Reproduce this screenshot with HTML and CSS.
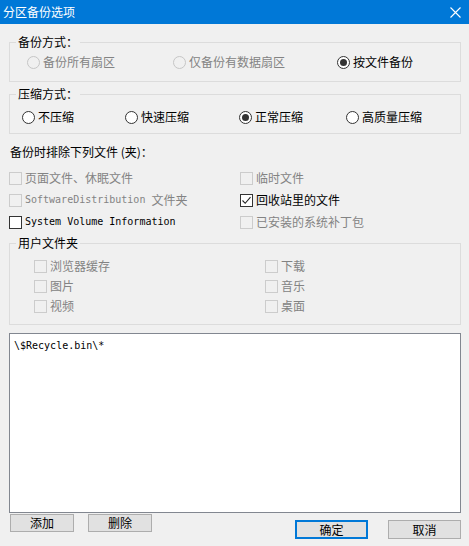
FILE: index.html
```html
<!DOCTYPE html>
<html lang="zh-CN">
<head>
    <meta charset="UTF-8">
    <title>分区备份选项</title>
    <link rel="stylesheet" href="styles.css">
</head>
<body>
    <div class="titlebar">
        <span class="title">分区备份选项</span>
        <svg class="close" width="11" height="11" viewBox="0 0 11 11">
            <path d="M0.5 0.5 L10.5 10.5 M10.5 0.5 L0.5 10.5" stroke="#fff" stroke-width="1.1" fill="none"/>
        </svg>
    </div>

    <div class="dialog">
        <fieldset class="group g-mode">
            <legend>备份方式<span class="punc">：</span></legend>
            <div class="row">
                <label class="opt w-146 disabled"><span class="radio"></span>备份所有扇区</label>
                <label class="opt w-164 disabled"><span class="radio"></span>仅备份有数据扇区</label>
                <label class="opt"><span class="radio on"></span>按文件备份</label>
            </div>
        </fieldset>

        <fieldset class="group g-zip">
            <legend>压缩方式<span class="punc">：</span></legend>
            <div class="row">
                <label class="opt w-103"><span class="radio"></span>不压缩</label>
                <label class="opt w-114"><span class="radio"></span>快速压缩</label>
                <label class="opt w-107"><span class="radio on"></span>正常压缩</label>
                <label class="opt"><span class="radio"></span>高质量压缩</label>
            </div>
        </fieldset>

        <div class="caption">备份时排除下列文件 (夹)<span class="punc">：</span></div>
        <div class="excl">
            <label class="opt disabled"><span class="check"></span>页面文件、休眠文件</label>
            <label class="opt disabled"><span class="check"></span>临时文件</label>
            <label class="opt disabled"><span class="check"></span><span class="mono">SoftwareDistribution </span>文件夹</label>
            <label class="opt"><span class="check on">
                <svg width="11" height="11" viewBox="0 0 11 11"><path d="M1.5 5.5 L4.2 8.3 L9.5 2.2" stroke="#222" stroke-width="1.1" fill="none"/></svg>
            </span>回收站里的文件</label>
            <label class="opt"><span class="check"></span><span class="mono">System Volume Information</span></label>
            <label class="opt disabled"><span class="check"></span>已安装的系统补丁包</label>
        </div>

        <fieldset class="group g-user">
            <legend>用户文件夹</legend>
            <div class="user-grid">
                <label class="opt disabled"><span class="check"></span>浏览器缓存</label>
                <label class="opt disabled"><span class="check"></span>下载</label>
                <label class="opt disabled"><span class="check"></span>图片</label>
                <label class="opt disabled"><span class="check"></span>音乐</label>
                <label class="opt disabled"><span class="check"></span>视频</label>
                <label class="opt disabled"><span class="check"></span>桌面</label>
            </div>
        </fieldset>

        <div class="listbox"><span class="mono">\$Recycle.bin\*</span></div>

        <div class="buttons">
            <div class="btn-left">
                <button class="btn small">添加</button>
                <button class="btn small">删除</button>
            </div>
            <div class="btn-right">
                <button class="btn big default">确定</button>
                <button class="btn big">取消</button>
            </div>
        </div>
    </div>
</body>
</html>
```

FILE: styles.css
```css
* {
    padding: 0;
    margin: 0;
    box-sizing: border-box;
}

body {
    background-color: #f0f0f0;
    font-family: "Noto Sans CJK SC", "Noto Sans", sans-serif;
    font-size: 12px;
    line-height: 14px;
    color: #000;
    width: 469px;
    height: 546px;
    overflow: hidden;
}

.titlebar {
    height: 24px;
    background-color: #0078d7;
    color: white;
    display: flex;
    align-items: center;
    justify-content: space-between;
    padding: 0 8px 0 3px;
}

.title {
    font-size: 12px;
    line-height: 16px;
}

.dialog {
    padding: 0 8px 0 9px;
}

.group {
    border: 1px solid #dcdcdc;
    padding: 0;
}

.group legend {
    margin-left: 6px;
    padding: 0 2px;
    line-height: 14px;
}

.punc {
    font-family: "Noto Sans CJK TC", "Noto Sans CJK SC", sans-serif;
}

.g-mode {
    margin-top: 11px;
    padding: 6px 0 12px 0;
}

.g-mode .row {
    padding-left: 17px;
}

.g-zip {
    margin-top: 5px;
    padding: 9px 0 9px 0;
}

.g-zip .row {
    padding-left: 12px;
}

.row {
    display: flex;
    height: 14px;
    align-items: center;
}

.opt {
    display: flex;
    align-items: center;
    white-space: nowrap;
}

.opt.disabled {
    color: #838383;
}

.w-146 { width: 146px; }
.w-164 { width: 164px; }
.w-103 { width: 103px; }
.w-114 { width: 114px; }
.w-107 { width: 107px; }

.radio {
    width: 13px;
    height: 13px;
    border: 1px solid #333;
    border-radius: 50%;
    background-color: #fff;
    margin-right: 3px;
    display: flex;
    align-items: center;
    justify-content: center;
}

.disabled .radio {
    border-color: #c6c6c6;
    background-color: #f0f0f0;
}

.radio.on::after {
    content: "";
    width: 7px;
    height: 7px;
    border-radius: 50%;
    background-color: #333;
}

.check {
    width: 13px;
    height: 13px;
    border: 1px solid #333;
    background-color: #fff;
    margin-right: 3px;
    display: flex;
    align-items: center;
    justify-content: center;
}

.disabled .check {
    border-color: #cccccc;
    background-color: #f0f0f0;
}

.mono {
    font-family: "DejaVu Sans Mono", "Liberation Mono", monospace;
    font-size: 10px;
    white-space: pre;
}

.caption {
    margin-top: 11px;
    padding-left: 1px;
}

.excl {
    margin-top: 8px;
    display: grid;
    grid-template-columns: 231px 1fr;
    grid-auto-rows: 22px;
}

.g-user {
    margin-top: 3px;
    padding: 6px 0 8px 0;
}

.user-grid {
    padding-left: 24px;
    display: grid;
    grid-template-columns: 231px 1fr;
    grid-auto-rows: 20px;
}

.listbox {
    margin-top: 8px;
    height: 180px;
    background-color: #fff;
    border: 1px solid #828790;
    padding: 4px 4px;
    line-height: 12px;
}

.buttons {
    display: flex;
    justify-content: space-between;
}

.btn-left {
    display: flex;
    gap: 14px;
    padding-left: 1px;
    margin-top: 1px;
}

.btn-right {
    display: flex;
    gap: 20px;
    margin-top: 7px;
}

.btn {
    font-family: "Noto Sans CJK SC", sans-serif;
    font-size: 12px;
    line-height: 14px;
    background-color: #e1e1e1;
    border: 1px solid #adadad;
    color: #000;
}

.btn.small {
    width: 64px;
    height: 18px;
}

.btn.big {
    width: 73px;
    height: 19px;
}

.btn.default {
    border: 2px solid #0078d7;
}
```
